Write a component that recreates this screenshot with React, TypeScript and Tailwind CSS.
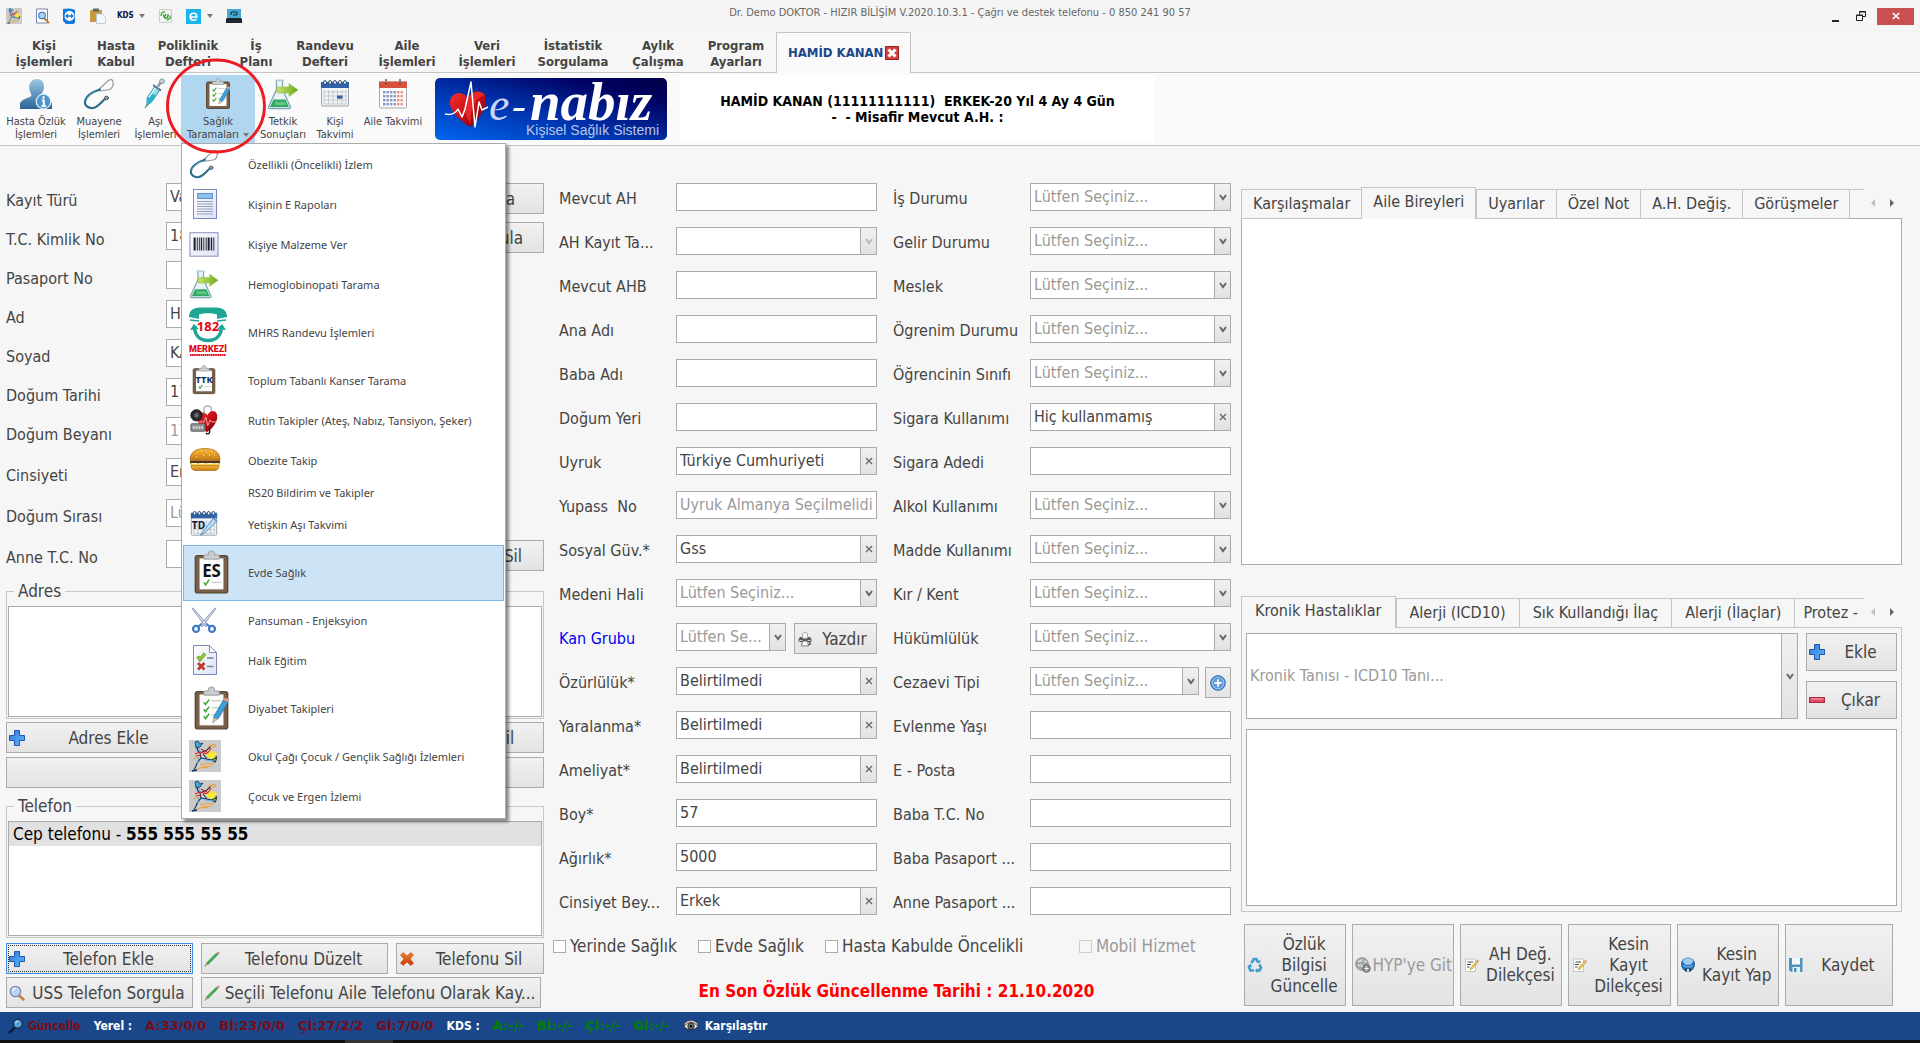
import React, { useId } from "react";

type P = { className?: string };

/* ---------- shared gradients ---------- */

function Gradients() {
  return (
    <svg className="absolute size-0" aria-hidden="true">
      <defs>
        <linearGradient id="gBlue" x1="0" y1="0" x2="0" y2="1">
          <stop offset="0" stopColor="#9cc8e4" />
          <stop offset="1" stopColor="#2a6496" />
        </linearGradient>
        <linearGradient id="gPlus" x1="0" y1="0" x2="1" y2="1">
          <stop offset="0" stopColor="#2f78e0" />
          <stop offset="1" stopColor="#62b8f5" />
        </linearGradient>
        <linearGradient id="gLogo" x1="0" y1="1" x2="1" y2="0">
          <stop offset="0" stopColor="#0066f0" />
          <stop offset="0.45" stopColor="#0030a8" />
          <stop offset="0.8" stopColor="#000060" />
          <stop offset="1" stopColor="#000048" />
        </linearGradient>
        <linearGradient id="gRed" x1="0" y1="0" x2="1" y2="1">
          <stop offset="0" stopColor="#f4352e" />
          <stop offset="0.5" stopColor="#c80e18" />
          <stop offset="1" stopColor="#700008" />
        </linearGradient>
        <linearGradient id="gArrow" x1="0" y1="0" x2="1" y2="0">
          <stop offset="0" stopColor="#c6e56a" />
          <stop offset="1" stopColor="#6aa81c" />
        </linearGradient>
        <linearGradient id="gBun" x1="0" y1="0" x2="0" y2="1">
          <stop offset="0" stopColor="#f6b83e" />
          <stop offset="1" stopColor="#c97d10" />
        </linearGradient>
        <linearGradient id="gCross" x1="0" y1="0" x2="0" y2="1">
          <stop offset="0" stopColor="#f08a2c" />
          <stop offset="1" stopColor="#c9300c" />
        </linearGradient>
        <linearGradient id="gDoc" x1="0" y1="0" x2="1" y2="1">
          <stop offset="0" stopColor="#ffffff" />
          <stop offset="1" stopColor="#dde3f2" />
        </linearGradient>
      </defs>
    </svg>
  );
}

/* ---------- large icons ---------- */

function PersonInfo({ className = "size-8" }: P) {
  return (
    <svg viewBox="0 0 32 32" className={className} aria-hidden="true">
      <path d="M17 1c4.500 0 7 3 7 7.500 0 3.500-1.500 6-3 8-.6 1.500.3 2.500 2 3.200 4 1.600 8 2.500 9 6V31H0v-5c.5-3.500 4-4.600 8-6.300 3-1 4-2 3-4-1.200-2-1.800-4-1.800-7C9.500 4 12.500 1 17 1z" fill="url(#gBlue)" />
      <circle cx="23.500" cy="23.500" r="7.300" fill="#4b93c8" stroke="#d8ecf8" strokeWidth="1.300" />
      <path d="M23.500 18.300v2.400M21.800 22.500h2v5.200M21.500 27.900h4.400" stroke="#fff" strokeWidth="2" fill="none" />
    </svg>
  );
}

function Stethoscope({ className = "size-8" }: P) {
  return (
    <svg viewBox="0 0 32 32" className={className} aria-hidden="true" fill="none" strokeLinecap="round">
      <path d="M15 12 26 2q3.200-1 4 1.200Q31 9 27 11.500L17 13z" stroke="#8f969a" strokeWidth="1.200" />
      <path d="M17 11.500C10 13.500 3 18 2 23.500c-.5 4 3 7 8 6.500 5.500-.8 8-6 13-10" stroke="#2c6f8c" strokeWidth="2.200" />
      <path d="M3.200 22c1.500-4 5-6.500 9-8.200" stroke="#8cc0d2" strokeWidth="0.700" />
      <circle cx="23.500" cy="20" r="1.900" fill="#9aa2a8" stroke="#4a5054" strokeWidth="0.900" />
    </svg>
  );
}

function Syringe({ className = "size-8" }: P) {
  return (
    <svg viewBox="2 0 32 32" className={className} aria-hidden="true">
      <path d="M7 30l3-5" stroke="#6f8088" strokeWidth="1.300" />
      <path d="M9 20 17 8l5 3.500-8 12-5 4z" fill="#8fdde8" stroke="#2f8ca4" />
      <path d="M10 20.500 13.500 15l4.500 3-4.500 6-4 2.500z" fill="#22b4cc" />
      <path d="m15 7 8 5.500" stroke="#5a7480" strokeWidth="1.800" />
      <path d="m20 8.500 3-4.500" stroke="#8b9ba4" strokeWidth="2.600" />
      <circle cx="24" cy="3.200" r="2.400" fill="#c3ced4" stroke="#8b9ba4" />
      <path d="m17 10-6 9.500" stroke="#fff" strokeWidth="1.200" />
    </svg>
  );
}

function Clipboard({ className = "size-8", mark, markClass = "fill-[#111]" }: P & { mark?: string; markClass?: string }) {
  return (
    <svg viewBox="0 0 32 32" className={className} aria-hidden="true">
      <rect x="4.500" y="4" width="23" height="26.500" rx="1.500" fill="#77604a" stroke="#5d4937" />
      <rect x="7.500" y="6" width="17" height="22" fill="#fdfdfd" />
      <path d="M10.500 6.500V4.500q0-1 1-1H14V1.500q2-2 4 0v2h2.500q1 0 1 1v2z" fill="#c9cdd0" stroke="#9a9ea2" strokeWidth="0.700" />
      {mark ? (
        <>
          <text x="16" y="19" textAnchor="middle" fontSize={mark.length > 2 ? 10 : 12} fontWeight="bold" fontFamily="Noto Sans, sans-serif" className={markClass}>
            {mark}
          </text>
          <path d="m10.500 23 1.300 1.800 2.500-3.600" stroke="#3fa535" strokeWidth="1.100" fill="none" />
          <path d="M16 23h7" stroke="#c4c4c4" strokeWidth="0.800" />
        </>
      ) : (
        <>
          {[11.500, 16.500, 21.500].map((y) => (
            <g key={y} fill="none">
              <path d={`m10.500 ${y} 1.300 1.700 2.500-3.500`} stroke="#3fa535" strokeWidth="1.100" />
              <path d={`M16 ${y - 1}h7`} stroke="#c4c4c4" strokeWidth="0.800" />
            </g>
          ))}
          <path d="m17 26 .8-4.500L24.500 10l3 1.800-6.500 11z" fill="#3f9fd8" stroke="#2277b0" strokeWidth="0.600" />
          <path d="m17 26 .6-3.500 2.500 1.500z" fill="#f0c878" />
          <path d="m24.500 10 .9-1.600q2-.6 3 1.700l-.9 1.600z" fill="#e09880" />
        </>
      )}
    </svg>
  );
}

function FlaskArrow({ className = "size-8" }: P) {
  return (
    <svg viewBox="0 0 32 32" className={className} aria-hidden="true">
      <path d="M9.500 2.500v9L1.500 29q-.3 1.500 1.200 1.500h19.600q1.500 0 1.200-1.500l-8-17.500v-9" fill="#eaf4f8" stroke="#7fa6b8" strokeWidth="1.300" />
      <path d="M8 1.500h9v1.800H8z" fill="#b8d0da" />
      <path d="M6.500 21.500h12L22 29H3z" fill="#2fa864" />
      <path d="M8.500 22.500q2 3 6 1l3.500.5 1.500 3H8z" fill="#86d8a4" opacity=".6" />
      <path d="M10 9h12V5.500L31 12l-9 6.500V15H10z" fill="url(#gArrow)" stroke="#8cc440" strokeWidth="0.600" />
    </svg>
  );
}

function BlueCalendar({ className = "size-8", td = false }: P & { td?: boolean }) {
  return (
    <svg viewBox="0 0 32 32" className={className} aria-hidden="true">
      <rect x="2.500" y="5" width="27" height="23" rx="1" fill="#f2f4f6" stroke="#9da3aa" />
      <path d="M2 4h28v6H2z" fill="#2f62a8" />
      {[6, 11, 16, 21, 26].map((x) => (
        <ellipse key={x} cx={x} cy="4.500" rx="1.500" ry="2" fill="#dfe6ee" stroke="#24406c" strokeWidth="0.900" />
      ))}
      <path d="M5 14h22M5 18h22M5 22h22M5 26h22M5 12v14M9.500 12v14M14 12v14M18.500 12v14M23 12v14M27 12v14" stroke="#bcc2c8" strokeWidth="0.800" />
      {td ? (
        <>
          <text x="3" y="21.500" fontSize="11" fontWeight="bold" fontFamily="Noto Sans, sans-serif" className="fill-[#0c1c40]">TD</text>
          <path d="m12 28 3-4L26 10l3.500 3-12 12z" fill="#b9dcf4" stroke="#4b86c0" strokeWidth="0.900" />
          <path d="m25 9 5 4.500M28 9l2-3" stroke="#4b86c0" strokeWidth="1.200" />
        </>
      ) : (
        <path d="M18 17.500h5.500v3.200H18z" fill="#2f62a8" />
      )}
    </svg>
  );
}

function RedCalendar({ className = "size-8" }: P) {
  return (
    <svg viewBox="0 0 32 32" className={className} aria-hidden="true">
      <rect x="2.500" y="4" width="27" height="26" rx="1.500" fill="#fbfbfb" stroke="#a5a9ae" />
      <path d="M2 3.500h28V10H2z" fill="#d8503e" />
      <path d="M9 1v5M23 1v5" stroke="#5a3030" strokeWidth="2" />
      <path d="M9 1v4M23 1v4" stroke="#e8e8e8" strokeWidth="0.800" />
      {[13, 17, 21, 25].map((y) =>
        [6, 9.500, 13, 16.500, 20, 23.500].map((x) => (
          <rect key={`${x}-${y}`} x={x} y={y} width="2.400" height="2.400" fill={x > 19 ? "#ec9484" : "#8494c4"} />
        ))
      )}
    </svg>
  );
}

function Report({ className = "size-8" }: P) {
  return (
    <svg viewBox="0 0 32 32" className={className} aria-hidden="true">
      <rect x="4.500" y="1.500" width="23" height="29" fill="url(#gDoc)" stroke="#7c88bc" />
      <rect x="8.500" y="5.500" width="15" height="5" fill="#8fc0ea" stroke="#5c94cc" />
      <path d="M8 13.500h16M8 16h16M8 18.500h16M8 21h16M8 23.500h16M8 26h16" stroke="#8a94b8" strokeWidth="0.900" />
    </svg>
  );
}

function Barcode({ className = "size-8" }: P) {
  return (
    <svg viewBox="0 0 32 32" className={className} aria-hidden="true">
      <rect x="1" y="4" width="30" height="25" fill="url(#gDoc)" stroke="#7c88bc" />
      <path d="M6 9v14M21 9v14" stroke="#1c2030" strokeWidth="2.200" />
      <path d="M8.800 9v14M11 9v14M15.800 9v14M18.300 9v14M26.500 9v14" stroke="#1c2030" strokeWidth="1" />
      <path d="M13.300 9v14M24 9v14" stroke="#1c2030" strokeWidth="1.500" />
    </svg>
  );
}

function Mhrs({ className = "h-[50px] w-[38px]" }: P) {
  return (
    <svg viewBox="0 0 38 50" className={className} aria-hidden="true">
      <path d="M0 8.500Q1 1 10 .5h18q9 .5 10 8v1.500l-10 2V7.500Q19 5 10 7.500V12L0 10z" fill="#1fa594" />
      <path d="m1 13 9 1M37 13l-9 1" stroke="#1fa594" strokeWidth="1.600" />
      <path d="M5.500 19c0 9 5 14.500 13.500 14.500S32.500 28 32.500 19" fill="none" stroke="#1fa594" strokeWidth="3.500" />
      <path d="m1 23 4-6 5 5zM37 23l-4-6-5 5z" fill="#1fa594" />
      <text x="19" y="24" textAnchor="middle" fontSize="13" fontWeight="bold" fontFamily="Noto Sans, sans-serif" className="fill-[#e30613]">182</text>
      <text x="19" y="45" textAnchor="middle" fontSize="9" fontWeight="900" fontFamily="Roboto, sans-serif" className="fill-[#e30613]">MERKEZİ</text>
      <path d="M1 48h36" stroke="#e30613" strokeWidth="2.200" strokeDasharray="1.600 .5" />
    </svg>
  );
}

function HeartMonitor({ className = "size-8" }: P) {
  return (
    <svg viewBox="0 0 32 32" className={className} aria-hidden="true">
      <path d="M16 10V4q0-3 4-3t4 4v3" fill="none" stroke="#b0b4b8" strokeWidth="1.500" />
      <path d="M19 29C9 22 8 16 10 11c2-4 7-4 9.500 0C22 6 27 5 29.500 9 32 15 27 24 19 29z" fill="url(#gRed)" />
      <path d="M10 18h6l2-5 2 9 2.500-6 1.500 2h5" fill="none" stroke="#f4c0c0" strokeWidth="0.900" />
      <circle cx="8" cy="11" r="6" fill="#2c2c2e" stroke="#111" />
      <circle cx="8" cy="11" r="2.500" fill="#6c6c70" />
      <rect x="2" y="20" width="15" height="8" rx="1" fill="#8c8f92" stroke="#5e6164" />
      <path d="M4 24h11" stroke="#d8dadc" strokeWidth="2.500" strokeDasharray="2 1" />
      <path d="M22 24v5q-1 3-4 1" fill="none" stroke="#222" strokeWidth="1.500" />
    </svg>
  );
}

function Burger({ className = "size-8" }: P) {
  return (
    <svg viewBox="0 0 32 32" className={className} aria-hidden="true">
      <path d="M1 16C1 8 7 4.500 16 4.500S31 8 31 16z" fill="url(#gBun)" stroke="#a8660c" strokeWidth="0.700" />
      <path d="M8 9h1M12 7h1M17 8h1M22 7.500h1M25 11h1M14 11h1M20 11h1M7 13h1" stroke="#fff0c0" strokeWidth="1.200" />
      <path d="M1 16.500h30v2.500H1z" fill="#5a2c10" />
      <path d="M1 18.500q4 3.500 8 .5 4 3 8 0 4 3 8 0 3 2 6-.5v2H1z" fill="#8cc63a" />
      <path d="M2 20.500h28" stroke="#f4d448" strokeWidth="1.500" />
      <path d="M2 21.500h28q0 5-5 5H7q-5 0-5-5z" fill="url(#gBun)" stroke="#a8660c" strokeWidth="0.700" />
    </svg>
  );
}

function ScissorsIcon({ className = "size-8" }: P) {
  return (
    <svg viewBox="0 0 32 32" className={className} aria-hidden="true">
      <path d="M4 3 20 21l-2 2.500L3.500 4zM28 3 12 21l2 2.500L28.500 4z" fill="#d6dcec" stroke="#7f8cb4" strokeWidth="0.900" />
      <circle cx="7.500" cy="25.500" r="3.200" fill="none" stroke="#3f7cc4" strokeWidth="2.400" />
      <circle cx="24.500" cy="25.500" r="3.200" fill="none" stroke="#3f7cc4" strokeWidth="2.400" />
      <path d="m10 23 3.500-3M22 23l-3.500-3" stroke="#3f7cc4" strokeWidth="2" />
    </svg>
  );
}

function CheckDoc({ className = "size-8" }: P) {
  return (
    <svg viewBox="0 0 32 32" className={className} aria-hidden="true">
      <path d="M4.500 1.500h16l7 7v22h-23z" fill="url(#gDoc)" stroke="#7c88bc" />
      <path d="M20.500 1.500v7h7z" fill="#fff" stroke="#7c88bc" />
      <path d="m8.500 12.500 2.500 3 5-6" fill="none" stroke="#4e8e16" strokeWidth="3.200" />
      <path d="m8.500 12.500 2.500 3 5-6" fill="none" stroke="#a4dc3c" strokeWidth="1.500" />
      <path d="m9 19 6.500 6.500M15.500 19 9 25.500" stroke="#c03838" strokeWidth="2.800" />
      <path d="M18 14h6.500M18 22.500h6.500" stroke="#7484ac" strokeWidth="1.400" />
    </svg>
  );
}

function Runner({ className = "size-8" }: P) {
  return (
    <svg viewBox="0 0 32 32" className={className} aria-hidden="true">
      <path fill="#cbcbcb" d="M0 0h32v32H0z" />
      <path d="m18 12 4-2 1 3 5-1-2 5 3 4-5-1-4-2-3-3z" fill="#fbe92c" />
      <path d="m6 2 3-1 2 3 3-1-3 4-4 1z" fill="#3ca4dc" stroke="#14355e" strokeWidth="0.800" />
      <path d="M8 7q0 4 3 6l1 5q-4 4-5 8l-2 4M11 13l7-3 4-4" fill="none" stroke="#14355e" strokeWidth="1.100" />
      <path d="m12 18 5 1 6 1 3 2q2-2 1-6M14 14l4 5M23 20l5-3" fill="none" stroke="#14355e" strokeWidth="1.100" />
      <path d="M10 8q0 4 3 5M10 18l-2 5M16 20l8 1" fill="none" stroke="#54b8e8" strokeWidth="1.100" />
      <path d="M6 14q5-3 9-1t7-5M12 9l6 3M7 16l5-1" fill="none" stroke="#e02424" strokeWidth="1.100" />
      <path d="M11 25q8-3 14-1M8 29q6-3 11-1M21 4l6 1M19 6l8 1M4 19l6-2M14 27l9-1" fill="none" stroke="#f0981c" strokeWidth="0.900" />
      <path d="m3 31 5-1" stroke="#14355e" strokeWidth="1.500" />
    </svg>
  );
}

/* ---------- small icons ---------- */

function PlusIcon({ className = "size-4" }: P) {
  return (
    <svg viewBox="0 0 16 16" className={className} aria-hidden="true">
      <path d="M5.500.5h5v5h5v5h-5v5h-5v-5h-5v-5h5z" fill="url(#gPlus)" stroke="#1f56b4" />
    </svg>
  );
}

function MinusIcon({ className = "size-4" }: P) {
  return (
    <svg viewBox="0 0 16 16" className={className} aria-hidden="true">
      <rect x=".5" y="5.500" width="15" height="5" fill="#e04c64" stroke="#a82c40" />
      <path d="M2 7h12" stroke="#f4a4b0" />
    </svg>
  );
}

function PencilIcon({ className = "size-4" }: P) {
  return (
    <svg viewBox="0 0 16 16" className={className} aria-hidden="true">
      <path d="m.5 15.500 2-3.500 1.500 1.500z" fill="#d8b070" stroke="#777" strokeWidth="0.400" />
      <path d="m2.500 12 10-10 1.500 1.500-10 10z" fill="#3cb048" stroke="#1c7a28" strokeWidth="0.500" />
      <path d="m12.500 2 1-1q1-.8 1.800 0t-.3 1.500l-1 1z" fill="#e88080" />
    </svg>
  );
}

function CrossIcon({ className = "size-4" }: P) {
  return (
    <svg viewBox="0 0 16 16" className={className} aria-hidden="true">
      <path d="m4 1.500 4 3.500 4-3.500L14.500 4 11 8l3.500 4-2.500 2.500L8 11l-4 3.500L1.500 12 5 8 1.500 4z" fill="url(#gCross)" stroke="#c2410c" strokeWidth="0.600" strokeLinejoin="round" />
    </svg>
  );
}

function MagnifierIcon({ className = "size-4" }: P) {
  return (
    <svg viewBox="0 0 16 16" className={className} aria-hidden="true">
      <path d="m10 10.500 4.500 4" stroke="#c88838" strokeWidth="2.600" strokeLinecap="round" />
      <circle cx="6.500" cy="6.500" r="5.200" fill="#b8d4f4" stroke="#8088b0" strokeWidth="1.300" />
      <path d="M3.500 6q.5-2.500 3-2.700" stroke="#fff" strokeWidth="1.200" fill="none" />
    </svg>
  );
}

function DarkMagnifier({ className = "size-4" }: P) {
  return (
    <svg viewBox="0 0 16 16" className={className} aria-hidden="true">
      <path d="m6.500 10-5 4.500" stroke="#0b1c38" strokeWidth="2.400" strokeLinecap="round" />
      <circle cx="9.800" cy="5.800" r="4.500" fill="#5aa0d8" stroke="#1c2c44" strokeWidth="1.400" />
      <path d="M7.500 5q.6-2 2.600-2" stroke="#cfe8fa" strokeWidth="1.200" fill="none" />
    </svg>
  );
}

function PrinterIcon({ className = "size-4" }: P) {
  return (
    <svg viewBox="0 0 16 16" className={className} aria-hidden="true">
      <path d="M5.500 6V2.500q2.500-2.500 5 0V6" fill="#f4f4f4" stroke="#a4a4a4" strokeWidth="0.900" />
      <path d="M3 6h2l1 1.500h4L11 6h2l1.500 2.500v2h-13v-2z" fill="#58585a" />
      <path d="M2.500 9.500h3M10.500 9.500h3" stroke="#d4d4d4" strokeWidth="1" />
      <path d="M3 10.500h2.500M10.500 10.500H13v3h-1.500" stroke="#444" strokeWidth="1.200" fill="none" />
      <path d="M5.500 10h5l1 5h-7z" fill="#f8f8f8" stroke="#555" strokeWidth="0.800" />
    </svg>
  );
}

function RoundPlus({ className = "size-4" }: P) {
  return (
    <svg viewBox="0 0 16 16" className={className} aria-hidden="true">
      <circle cx="8" cy="8" r="7.300" fill="#5a9fe0" stroke="#2c64a8" />
      <circle cx="8" cy="8" r="5.800" fill="none" stroke="#a8d0f4" strokeWidth="0.800" />
      <path d="M6.700 3.800h2.600v2.900h2.900v2.600H9.300v2.900H6.700V9.300H3.800V6.700h2.900z" fill="#fff" stroke="#2c64a8" strokeWidth="0.500" />
    </svg>
  );
}

function RecycleIcon({ className = "size-4" }: P) {
  return (
    <svg viewBox="0 0 16 16" className={className} aria-hidden="true" fill="none" stroke="#3c9cd4" strokeWidth="2.600">
      <path d="m4.500 6 2.300-4h2.400l1.800 3" />
      <path d="m12.300 7.500 1.700 3-1.500 3H9.500" />
      <path d="M7 13.500H3.500L2 10.500l1-2" />
      <path d="m9.500 5.500 3.500.8.500-3.500zM10.500 11v5l-2.800-2.500zM1 9.300 3.300 6.500 5.500 10z" fill="#3c9cd4" stroke="none" />
    </svg>
  );
}

function GreyGlobe({ className = "size-4" }: P) {
  return (
    <svg viewBox="0 0 16 16" className={className} aria-hidden="true">
      <circle cx="7" cy="7" r="6.200" fill="#a8a8a8" stroke="#888" />
      <path d="M3 4q3 1 4-2M3 9q3-2 5 1M9 4l3 1" stroke="#dedede" strokeWidth="1.500" fill="none" />
      <circle cx="11.500" cy="11.500" r="3.800" fill="#8c8c8c" stroke="#6c6c6c" />
      <path d="M11.500 9.300v4.400M9.300 11.500h4.400" stroke="#f0f0f0" strokeWidth="1.200" />
    </svg>
  );
}

function NoteIcon({ className = "size-4" }: P) {
  return (
    <svg viewBox="0 0 16 16" className={className} aria-hidden="true">
      <path d="M2.500 2h10v12.500h-10z" fill="#fff" stroke="#c4c4c4" />
      <path d="M4.500 5h5.500M4 7.500h4M4 10h2.500" stroke="#444" strokeWidth="1" />
      <path d="m7 13 .7-2.400L13.500 4l1.500 1.300-5.700 6.700z" fill="#f4cc50" stroke="#a8842c" strokeWidth="0.500" />
      <path d="m13.500 4 .8-1q1.300-.2 1.500 1.200l-.8 1.100z" fill="#e88c8c" />
    </svg>
  );
}

function BlueGlobe({ className = "size-4" }: P) {
  return (
    <svg viewBox="0 0 16 16" className={className} aria-hidden="true">
      <circle cx="8" cy="7.500" r="7" fill="#1f68b0" />
      <ellipse cx="8" cy="4.500" rx="5" ry="3.400" fill="#9ccdf0" />
      <path d="M3 8.500q5 3 10 0" stroke="#5ca8e4" strokeWidth="1.800" fill="none" />
      <path d="M5 14.500q0-3.500 3-4 3 .5 3 4z" fill="#0f2c54" />
      <path d="m8 10.500 1.500 4h-3z" fill="#fff" />
    </svg>
  );
}

function FloppyIcon({ className = "size-4" }: P) {
  return (
    <svg viewBox="0 0 16 16" className={className} aria-hidden="true">
      <path d="M1 1h13.500v14H3l-2-2z" fill="#4f94bc" />
      <path d="M4 1h8v6.500H4z" fill="#f4f8fa" />
      <path d="M4.500 10h7.500v5H4.500z" fill="#e8f0f4" />
      <path d="M6 11h2.500v4H6z" fill="#4f94bc" />
    </svg>
  );
}

function EyeIcon({ className = "size-4" }: P) {
  return (
    <svg viewBox="0 0 16 16" className={className} aria-hidden="true">
      <path d="M.8 8.500Q8 0 15.200 8.500 8 15.500.8 8.500z" fill="#f4f0ea" stroke="#2a1c18" strokeWidth="0.800" />
      <path d="M1.500 6.500Q8 0 14.500 6.500" fill="none" stroke="#d8b8a0" strokeWidth="1.400" />
      <circle cx="8" cy="8.300" r="3.300" fill="#6c7078" stroke="#222" strokeWidth="0.800" />
      <circle cx="8" cy="8.300" r="1.300" fill="#000" />
    </svg>
  );
}

function Caret({ className = "h-1 w-1.5 fill-[#777]" }: P) {
  return (
    <svg viewBox="0 0 6 4" className={className} aria-hidden="true">
      <path d="M0 0h6L3 4z" />
    </svg>
  );
}

/* ---------- form building blocks ---------- */

function SideMark({ kind, muted }: { kind: "v" | "x"; muted?: boolean }) {
  return (
    <span className="pointer-events-none flex w-4 shrink-0 items-center justify-center border-l border-[#ababab] bg-linear-to-b from-[#f0f0f0] to-[#e2e2e2]">
      <svg viewBox="0 0 8 8" className="size-2" aria-hidden="true" fill="none" stroke={muted ? "#b8b8b8" : "#666"} strokeWidth={kind === "v" ? 2 : 1.300}>
        <path d={kind === "v" ? "m1 2 3 4 3-4" : "m1 1 6 6M7 1 1 7"} />
      </svg>
    </span>
  );
}

type FieldDef = {
  label: string;
  kind?: "text" | "v" | "x";
  value?: string;
  placeholder?: string;
  disabled?: boolean;
  link?: boolean;
  after?: React.ReactNode;
};

const CHOOSE = "Lütfen Seçiniz...";

function Control({ id, f, tall, name }: { id: string; f: FieldDef; tall?: boolean; name?: string }) {
  const kind = f.kind ?? "text";
  return (
    <div className={`flex min-w-0 flex-1 border border-[#ababab] bg-white ${tall ? "h-[86px]" : "h-7"}`}>
      {kind === "text" ? (
        <input id={id} type="text" defaultValue={f.value} placeholder={f.placeholder} disabled={f.disabled} className="w-full min-w-0 bg-transparent px-[3px] text-[16px] text-[#444] outline-none placeholder:text-[#9a9a9a] disabled:text-[#9a9a9a]" />
      ) : (
        <>
          <select id={id} aria-label={name} disabled={f.disabled} className={`w-full min-w-0 flex-1 appearance-none bg-transparent px-[3px] text-[16px] outline-none ${f.value ? "text-[#444]" : "text-[#9a9a9a]"}`}>
            <option>{f.value ?? f.placeholder ?? CHOOSE}</option>
          </select>
          <SideMark kind={kind} muted={f.disabled} />
        </>
      )}
    </div>
  );
}

function Field({ f, labelWidth }: { f: FieldDef; labelWidth: string }) {
  const id = useId();
  return (
    <div className="flex h-7 items-center">
      <label htmlFor={id} className={`shrink-0 pt-1 text-[16px] whitespace-pre ${labelWidth} ${f.link ? "text-[#0000ee]" : ""}`}>
        {f.label}
      </label>
      <Control id={id} f={f} />
      {f.after}
    </div>
  );
}

function Btn({ icon, children, className = "h-[31px]", focused, disabled }: { icon?: React.ReactNode; children: React.ReactNode; className?: string; focused?: boolean; disabled?: boolean }) {
  return (
    <button
      type="button"
      disabled={disabled}
      className={`flex min-w-0 items-center border bg-linear-to-b from-[#f1f1f1] to-[#e3e3e3] pl-[2px] whitespace-nowrap disabled:text-[#9a9a9a] ${focused ? "border-[#3c8fe8] outline-1 -outline-offset-3 outline-dotted outline-[#333]" : "border-[#ababab]"} ${className}`}
    >
      {icon}
      <span className="min-w-0 flex-1 text-center whitespace-pre-line">{children}</span>
    </button>
  );
}

/* ---------- data ---------- */

const MAIN_TABS: [string, string][] = [
  ["Kişi\nİşlemleri", "w-20"],
  ["Hasta\nKabul", "w-16"],
  ["Poliklinik\nDefteri", "w-20"],
  ["İş\nPlanı", "w-14"],
  ["Randevu\nDefteri", "w-[82px]"],
  ["Aile\nİşlemleri", "w-[82px]"],
  ["Veri\nİşlemleri", "w-[78px]"],
  ["İstatistik\nSorgulama", "w-[94px]"],
  ["Aylık\nÇalışma", "w-[76px]"],
  ["Program\nAyarları", "w-[80px]"],
];

const MENU: { text: string; icon?: React.ReactNode; row?: string; active?: boolean }[] = [
  { text: "Özellikli (Öncelikli) İzlem", icon: <Stethoscope className="size-[30px]" /> },
  { text: "Kişinin E Rapoları", icon: <Report /> },
  { text: "Kişiye Malzeme Ver", icon: <Barcode className="size-[30px]" /> },
  { text: "Hemoglobinopati Tarama", icon: <FlaskArrow className="size-[30px]" /> },
  { text: "MHRS Randevu İşlemleri", icon: <Mhrs />, row: "h-14" },
  { text: "Toplum Tabanlı Kanser Tarama", icon: <Clipboard mark="TTK" markClass="fill-[#12235c]" className="size-[30px]" /> },
  { text: "Rutin Takipler (Ateş, Nabız, Tansiyon, Şeker)", icon: <HeartMonitor className="size-[30px]" /> },
  { text: "Obezite Takip", icon: <Burger /> },
  { text: "RS20 Bildirim ve Takipler", row: "h-6" },
  { text: "Yetişkin Aşı Takvimi", icon: <BlueCalendar td className="size-[30px]" /> },
  { text: "Evde Sağlık", icon: <Clipboard mark="ES" className="size-[45px]" />, row: "h-14", active: true },
  { text: "Pansuman - Enjeksyion", icon: <ScissorsIcon className="size-[30px]" /> },
  { text: "Halk Eğitim", icon: <CheckDoc /> },
  { text: "Diyabet Takipleri", icon: <Clipboard className="size-[45px]" />, row: "h-14" },
  { text: "Okul Çağı Çocuk / Gençlik Sağlığı İzlemleri", icon: <Runner /> },
  { text: "Çocuk ve Ergen İzlemi", icon: <Runner /> },
];

const LEFT_FIELDS: (FieldDef & { row: string; button?: React.ReactNode })[] = [
  { label: "Kayıt Türü", value: "Vatandaş", kind: "v", row: "h-[39px]", button: <Btn className="h-[31px] w-[86px]">Ara</Btn> },
  { label: "T.C. Kimlik No", value: "18", row: "h-[39px]", button: <Btn className="h-[31px] w-[102px]">Sorgula</Btn> },
  { label: "Pasaport No", row: "h-[39px]" },
  { label: "Ad", value: "HAMİD", row: "h-[39px]" },
  { label: "Soyad", value: "KANAN", row: "h-[39px]" },
  { label: "Doğum Tarihi", value: "17", row: "h-[39px]" },
  { label: "Doğum Beyanı", value: "17", disabled: true, row: "h-[41px]" },
  { label: "Cinsiyeti", value: "Erkek", kind: "x", row: "h-[41px]" },
  { label: "Doğum Sırası", kind: "v", row: "h-[41px]" },
  { label: "Anne T.C. No", row: "h-[41px]", button: <Btn className="h-[31px] w-16">Sil</Btn> },
];

const COL_ONE: FieldDef[] = [
  { label: "Mevcut AH" },
  { label: "AH Kayıt Ta...", kind: "v", placeholder: " ", disabled: true },
  { label: "Mevcut AHB" },
  { label: "Ana Adı" },
  { label: "Baba Adı" },
  { label: "Doğum Yeri" },
  { label: "Uyruk", kind: "x", value: "Türkiye Cumhuriyeti" },
  { label: "Yupass  No", placeholder: "Uyruk Almanya Seçilmelidi" },
  { label: "Sosyal Güv.*", kind: "x", value: "Gss" },
  { label: "Medeni Hali", kind: "v" },
  {
    label: "Kan Grubu",
    kind: "v",
    placeholder: "Lütfen Se...",
    link: true,
    after: <Btn className="ml-2 h-[31px] w-[83px] shrink-0 self-start" icon={<PrinterIcon />}>Yazdır</Btn>,
  },
  { label: "Özürlülük*", kind: "x", value: "Belirtilmedi" },
  { label: "Yaralanma*", kind: "x", value: "Belirtilmedi" },
  { label: "Ameliyat*", kind: "x", value: "Belirtilmedi" },
  { label: "Boy*", value: "57" },
  { label: "Ağırlık*", value: "5000" },
  { label: "Cinsiyet Bey...", kind: "x", value: "Erkek" },
];

const COL_TWO: FieldDef[] = [
  { label: "İş Durumu", kind: "v" },
  { label: "Gelir Durumu", kind: "v" },
  { label: "Meslek", kind: "v" },
  { label: "Ögrenim Durumu", kind: "v" },
  { label: "Öğrencinin Sınıfı", kind: "v" },
  { label: "Sigara Kullanımı", kind: "x", value: "Hiç kullanmamış" },
  { label: "Sigara Adedi" },
  { label: "Alkol Kullanımı", kind: "v" },
  { label: "Madde Kullanımı", kind: "v" },
  { label: "Kır / Kent", kind: "v" },
  { label: "Hükümlülük", kind: "v" },
  {
    label: "Cezaevi Tipi",
    kind: "v",
    after: (
      <button type="button" aria-label="Cezaevi ekle" className="ml-1.5 flex h-[31px] w-[26px] shrink-0 items-center justify-center self-start border border-[#ababab] bg-linear-to-b from-[#f1f1f1] to-[#e3e3e3]">
        <RoundPlus />
      </button>
    ),
  },
  { label: "Evlenme Yaşı" },
  { label: "E - Posta" },
  { label: "Baba T.C. No" },
  { label: "Baba Pasaport ..." },
  { label: "Anne Pasaport ..." },
];

const CHECKS = [
  { label: "Yerinde Sağlık", cell: "w-[145px]" },
  { label: "Evde Sağlık", cell: "w-[127px]" },
  { label: "Hasta Kabulde Öncelikli", cell: "w-[254px]" },
  { label: "Mobil Hizmet", cell: "", disabled: true },
];

/* ---------- page parts ---------- */

function TitleBar() {
  return (
    <header className="relative flex h-8 items-center justify-center bg-[#f5f5f5]">
      <div className="absolute inset-y-0 left-1.5 flex items-center">
        <button type="button" aria-label="Ana menü" className="w-[29px]"><Runner className="size-4" /></button>
        <button type="button" aria-label="Ara" className="w-[27px]">
          <svg viewBox="0 0 16 16" className="size-4" aria-hidden="true">
            <path d="M1.500 1h11v14h-11z" fill="#fff" stroke="#7484ac" />
            <path d="m9 10 5 5" stroke="#c07c30" strokeWidth="2" />
            <circle cx="7" cy="7.500" r="3.500" fill="#a8d0f0" stroke="#2c64a8" />
          </svg>
        </button>
        <button type="button" aria-label="Uzak destek" className="w-7">
          <svg viewBox="0 0 16 16" className="size-4" aria-hidden="true">
            <path d="M1 1q8-1.500 12 1v13l-2 1H4l-3-3z" fill="#1478dc" />
            <circle cx="7.500" cy="8" r="5" fill="#fff" />
            <path d="m3 8 3-2.500v1.700h3V5.500L12 8l-3 2.500V8.800H6v1.700z" fill="#1478dc" />
          </svg>
        </button>
        <button type="button" aria-label="Yapıştır" className="w-[27px]">
          <svg viewBox="0 0 16 16" className="size-4" aria-hidden="true">
            <path d="M0 2h12v12H0z" fill="#c8983c" />
            <path d="M3 .5h6v3H3z" fill="#666" />
            <path d="M6.500 6h6l3 3v6.500h-9z" fill="#f4f8fc" stroke="#b0c4d8" strokeWidth="0.800" />
          </svg>
        </button>
        <button type="button" className="flex w-[42px] items-center gap-[5px] text-[8px] leading-4 font-bold text-[#0c1440]">KDS <Caret /></button>
        <button type="button" aria-label="Yenile" className="w-[27px]">
          <svg viewBox="0 0 16 16" className="size-4" aria-hidden="true">
            <path d="M.5 1.500h12v13H.500z" fill="#f4f4f4" stroke="#ccc" />
            <path d="M2 8q0-4 4-4.500M11.500 7.500q0 4-4 4.500" fill="none" stroke="#5cbc4c" strokeWidth="1.600" />
            <path d="M4.500 6.500q0 3 2 3.500t2.500-2V6M6.500 6v2.500" fill="none" stroke="#2c942c" strokeWidth="1.300" />
          </svg>
        </button>
        <button type="button" aria-label="Tarayıcı" className="flex w-10 items-center gap-[6px]">
          <svg viewBox="0 0 16 16" className="size-[15px]" aria-hidden="true">
            <path d="M0 0h16v16H0z" fill="#1cb4ec" />
            <path d="M4.500 8.500h7q0-4-3.500-4t-3.500 4q.2 3.500 3.500 3.500 2.200 0 3.200-1.500" fill="none" stroke="#fff" strokeWidth="1.800" />
          </svg>
          <Caret />
        </button>
        <button type="button" aria-label="Yedekle">
          <svg viewBox="0 0 16 16" className="size-4" aria-hidden="true">
            <path d="M1 1h14v10H1z" fill="#48a8d0" />
            <path d="m0 11 1-1h14l1 1v4H0z" fill="#20242c" />
            <path d="M5 7V5q0-1 1-1h4q1 0 1 1.500T10 7H7" fill="none" stroke="#0c2c48" strokeWidth="1.200" />
          </svg>
        </button>
      </div>
      <h1 className="pb-1.5 text-[11px] text-[#666]">Dr. Demo DOKTOR - HIZIR BİLİŞİM V.2020.10.3.1 - Çağrı ve destek telefonu - 0 850 241 90 57</h1>
      <div className="absolute inset-y-0 right-1.5 flex items-center gap-2">
        <button type="button" aria-label="Simge durumuna küçült" className="flex h-4 w-5 items-end justify-center pb-0.5"><span className="h-0.5 w-[7px] bg-[#222]" /></button>
        <button type="button" aria-label="Geri yükle" className="flex size-4 items-center justify-center">
          <svg viewBox="0 0 10 10" className="size-2.5" aria-hidden="true" fill="none" stroke="#222">
            <path d="M3.500 3.500v-3h6v5h-3M3 1h7M.5 4.500h6v5h-6zM0 4h7" />
          </svg>
        </button>
        <button type="button" aria-label="Kapat" className="flex h-[17px] w-[37px] items-center justify-center bg-[#c75050]">
          <svg viewBox="0 0 8 8" className="size-2" aria-hidden="true" stroke="#fff" strokeWidth="1.700"><path d="m.8 1 6.400 6M7.200 1 .8 7" /></svg>
        </button>
      </div>
    </header>
  );
}

function MainTabs() {
  return (
    <nav className="flex h-[41px] border-b border-[#c5c5c5] bg-[#f6f6f6] pl-1 text-[13px] leading-4 font-bold text-[#444]">
      {MAIN_TABS.map(([t, w]) => (
        <a key={t} href="#" className={`shrink-0 pt-1.5 text-center whitespace-pre-line ${w}`}>{t}</a>
      ))}
      <a href="#" className="-mb-px flex items-center gap-0.5 border border-b-0 border-[#c5c5c5] bg-[#fafafa] px-[11px] text-[#1a478a]">
        HAMİD KANAN
        <svg viewBox="0 0 14 14" className="size-3.5" aria-hidden="true">
          <path d="M.5.500h13v13H.500z" fill="#d8403c" stroke="#8c2020" />
          <path d="m3.500 3.500 7 7M10.500 3.500l-7 7" stroke="#fff" strokeWidth="3" />
        </svg>
      </a>
    </nav>
  );
}

function RibbonButton({ icon, text, width }: { icon: React.ReactNode; text: string; width: string }) {
  return (
    <button type="button" className={`flex shrink-0 flex-col items-center pt-[3px] ${width}`}>
      {icon}
      <span className="mt-[5px] whitespace-pre">{text}</span>
    </button>
  );
}

function ScreeningMenu() {
  return (
    <ul role="menu" className="absolute top-full left-0 z-20 w-[325px] border border-[#ababab] bg-white p-px font-['Noto_Sans',sans-serif] text-[11px] text-[#444] shadow-[3px_3px_3px_rgba(0,0,0,0.45)]">
      {MENU.map((m) => (
        <li key={m.text} role="none">
          <button type="button" role="menuitem" className={`flex w-full items-center border pb-0.5 pl-[5px] text-left ${m.row ?? "h-10"} ${m.active ? "border-[#7eb4ea] bg-[#cde4f7]" : "border-transparent"}`}>
            <span className="flex w-[59px] shrink-0 items-center">{m.icon}</span>
            {m.text}
          </button>
        </li>
      ))}
    </ul>
  );
}

function ENabizLogo() {
  return (
    <svg viewBox="0 0 232 62" className="h-[62px] w-[232px] shrink-0 overflow-visible" role="img" aria-label="e-nabız Kişisel Sağlık Sistemi">
      <rect width="232" height="62" rx="5" fill="url(#gLogo)" />
      <path d="M35 49C21 40 14 31 15 23c2-9 12-11 18-3 4-8 13-9 17-3 3 10-3 22-15 32z" fill="url(#gRed)" />
      <path d="M36 46C29 36 27 28 33 20c4-7 13-8 17-3-8 2-15 10-14 29z" fill="#f2322c" opacity=".7" />
      <path d="M10 36q9 2 13-5l4 8 3-8 6-27 4 45 4-25 3 8 6-3" fill="none" stroke="#fff" strokeWidth="1.500" strokeLinejoin="round" />
      <text x="54" y="42" fontSize="46" fontStyle="italic" fontFamily="Liberation Serif, serif" fill="#c8d6f8">e</text>
      <path d="M79 30h11l-1 3H78z" fill="#fff" />
      <text x="95" y="42" fontSize="55" fontStyle="italic" fontWeight="bold" fontFamily="Liberation Serif, serif" fill="#fff">nabız</text>
      <text x="91" y="57" fontSize="14" fontFamily="Liberation Sans, sans-serif" fill="#b8c6ea">Kişisel Sağlık Sistemi</text>
    </svg>
  );
}

function Ribbon() {
  return (
    <div className="flex h-[73px] items-start border-b border-[#c5c5c5] bg-[#fafafa] pt-0.5 pl-1 text-[11px] leading-[13px] text-[#444]">
      <RibbonButton width="w-16" icon={<PersonInfo />} text={"Hasta Özlük\nİşlemleri"} />
      <RibbonButton width="w-[62px]" icon={<Stethoscope />} text={"Muayene\nİşlemleri"} />
      <RibbonButton width="w-[51px]" icon={<Syringe />} text={"Aşı\nİşlemleri"} />
      <div className="relative w-[74px] shrink-0">
        <button type="button" aria-haspopup="menu" aria-expanded="true" className="flex h-[68px] w-full flex-col items-center bg-[#b1d6f0] pt-[3px]">
          <Clipboard />
          <span className="mt-[5px]">Sağlık</span>
          <span className="flex items-center gap-1">Taramaları <Caret /></span>
        </button>
        <ScreeningMenu />
        <svg viewBox="0 0 102 98" className="pointer-events-none absolute -top-[18px] -left-4 z-30 h-[98px] w-[102px] max-w-none" aria-hidden="true">
          <ellipse cx="51" cy="49" rx="48.500" ry="46" fill="none" stroke="#ed1c24" strokeWidth="3" />
        </svg>
      </div>
      <RibbonButton width="w-14" icon={<FlaskArrow />} text={"Tetkik\nSonuçları"} />
      <RibbonButton width="w-12" icon={<BlueCalendar />} text={"Kişi\nTakvimi"} />
      <RibbonButton width="w-[68px]" icon={<RedCalendar />} text="Aile Takvimi" />
      <div className="ml-2 pt-[3px]"><ENabizLogo /></div>
      <p className="ml-[13px] flex h-[68px] w-[475px] items-center justify-center bg-white text-center text-[14px] leading-4 font-bold whitespace-pre text-black">
        {"HAMİD KANAN (11111111111)  ERKEK-20 Yıl 4 Ay 4 Gün\n-  - Misafir Mevcut A.H. :"}
      </p>
    </div>
  );
}

function LeftField({ f }: { f: (typeof LEFT_FIELDS)[number] }) {
  const id = useId();
  return (
    <div className={`flex items-start ${f.row}`}>
      <label htmlFor={id} className="w-40 shrink-0 pt-[7px] text-[16px]">{f.label}</label>
      <Control id={id} f={f} />
      <div className="flex w-28 shrink-0 justify-end">{f.button}</div>
    </div>
  );
}

function PersonPanel() {
  return (
    <section className="flex min-w-0 flex-[538] flex-col pt-[37px] pb-1">
      {LEFT_FIELDS.map((f) => <LeftField key={f.label} f={f} />)}
      <fieldset className="min-w-0 border border-[#c8c8c8] px-px pt-[5px] pb-px">
        <legend className="ml-1.5 px-1 leading-5">Adres</legend>
        <div className="h-[111px] border border-[#ababab] bg-white" />
      </fieldset>
      <div className="mt-[3px] grid grid-cols-[187fr_187fr_148fr] gap-2">
        <Btn icon={<PlusIcon />}>Adres Ekle</Btn>
        <Btn icon={<PencilIcon />}>Adresi Düzelt</Btn>
        <Btn icon={<CrossIcon />}>Adresi Sil</Btn>
      </div>
      <Btn className="mt-1 h-[31px]">USS Adres Sorgula</Btn>
      <fieldset className="mt-2 min-w-0 border border-[#c8c8c8] px-px pt-[5px] pb-px">
        <legend className="ml-1.5 px-1 leading-5">Telefon</legend>
        <div className="h-[115px] border border-[#ababab] bg-white">
          <p className="bg-[#e1e1e1] px-1 leading-6 text-black">Cep telefonu - <b>555 555 55 55</b></p>
        </div>
      </fieldset>
      <div className="mt-[5px] grid grid-cols-[187fr_187fr_148fr] gap-2">
        <Btn focused icon={<PlusIcon />}>Telefon Ekle</Btn>
        <Btn icon={<PencilIcon />}>Telefonu Düzelt</Btn>
        <Btn icon={<CrossIcon />}>Telefonu Sil</Btn>
      </div>
      <div className="mt-[3px] grid grid-cols-[187fr_340fr] gap-2 pr-[3px]">
        <Btn icon={<MagnifierIcon />}>USS Telefon Sorgula</Btn>
        <Btn icon={<PencilIcon />}>Seçili Telefonu Aile Telefonu Olarak Kay...</Btn>
      </div>
    </section>
  );
}

function DetailPanel() {
  return (
    <section className="ml-2 min-w-0 flex-[679] pt-[37px]">
      <div className="grid grid-cols-[318fr_338fr] gap-x-4 pl-[7px]">
        <div className="flex min-w-0 flex-col gap-4">
          {COL_ONE.map((f) => <Field key={f.label} f={f} labelWidth="w-[117px]" />)}
        </div>
        <div className="flex min-w-0 flex-col gap-4">
          {COL_TWO.map((f) => <Field key={f.label} f={f} labelWidth="w-[137px]" />)}
        </div>
      </div>
      <div className="mt-[21px] flex pl-px">
        {CHECKS.map((c) => (
          <label key={c.label} className={`flex shrink-0 items-center gap-1 leading-5 whitespace-nowrap ${c.cell} ${c.disabled ? "text-[#9a9a9a]" : ""}`}>
            <input type="checkbox" disabled={c.disabled} className="size-[13px] appearance-none border border-[#ababab] bg-white disabled:border-[#cfcfcf] disabled:bg-transparent" />
            {c.label}
          </label>
        ))}
      </div>
      <p className="mt-[25px] pl-2.5 text-center leading-5 font-bold text-[#f00]">En Son Özlük Güncellenme Tarihi : 21.10.2020</p>
    </section>
  );
}

function TabStrip({ tabs, active, cut, pad }: { tabs: string[]; active: number; cut: React.ReactNode; pad: string }) {
  return (
    <div className="flex h-8 items-end text-[16px]" role="tablist">
      <div className="flex min-w-0 flex-1 items-end overflow-hidden">
        {tabs.map((t, i) => (
          <button
            key={t}
            type="button"
            role="tab"
            aria-selected={i === active}
            className={`shrink-0 border-t border-l border-[#c5c5c5] bg-[#f6f6f6] whitespace-nowrap ${pad} ${i === active ? "h-8 border-r pb-1" : "h-[30px] border-b"} ${i === tabs.length - 1 ? "border-r" : ""}`}
          >
            {t}
          </button>
        ))}
        {cut}
      </div>
      <div className="flex w-[38px] shrink-0 items-center justify-between self-stretch pr-2 pl-[7px]">
        <button type="button" aria-label="Önceki"><svg viewBox="0 0 4 8" className="h-2 w-1 fill-[#c0c0c0]" aria-hidden="true"><path d="M4 0v8L0 4z" /></svg></button>
        <button type="button" aria-label="Sonraki"><svg viewBox="0 0 4 8" className="h-2 w-1 fill-[#666]" aria-hidden="true"><path d="M0 0v8l4-4z" /></svg></button>
      </div>
    </div>
  );
}

function SidePanel() {
  return (
    <section className="ml-2.5 min-w-0 flex-[661] pt-[41px]">
      <TabStrip
        pad="px-[11px]"
        tabs={["Karşılaşmalar", "Aile Bireyleri", "Uyarılar", "Özel Not", "A.H. Değiş.", "Görüşmeler"]}
        active={1}
        cut={<span className="h-[30px] flex-1 border-t border-[#c5c5c5]" />}
      />
      <div className="-mt-px h-[347px] border border-[#ababab] bg-white" />

      <div className="mt-[31px]">
        <TabStrip
          pad="px-[13px]"
          tabs={["Kronik Hastalıklar", "Alerji (ICD10)", "Sık Kullandığı İlaç", "Alerji (İlaçlar)"]}
          active={0}
          cut={<span className="h-[30px] flex-1 border-t border-[#c5c5c5] pl-2 leading-7 whitespace-nowrap">Protez -</span>}
        />
      </div>
      <div className="-mt-px border border-[#c5c5c5] px-1 py-[5px]">
        <div className="flex gap-2">
          <Control id="icd-search" name="Kronik Tanısı" tall f={{ label: "Kronik Tanısı", kind: "v", placeholder: "Kronik Tanısı - ICD10 Tanı..." }} />
          <div className="flex w-[91px] shrink-0 flex-col justify-between">
            <Btn className="h-[38px]" icon={<PlusIcon />}>Ekle</Btn>
            <Btn className="h-[38px]" icon={<MinusIcon />}>Çıkar</Btn>
          </div>
        </div>
        <div className="mt-2.5 h-[177px] border border-[#ababab] bg-white" />
      </div>

      <div className="mt-3 mr-[9px] mb-1.5 ml-[3px] grid grid-cols-[102fr_102fr_102fr_102fr_102fr_108fr] gap-1.5 leading-[21px]">
        <Btn className="h-[82px]" icon={<RecycleIcon />}>{"Özlük\nBilgisi\nGüncelle"}</Btn>
        <Btn className="h-[82px]" disabled icon={<GreyGlobe />}>HYP'ye Git</Btn>
        <Btn className="h-[82px]" icon={<NoteIcon />}>{"AH Değ.\nDilekçesi"}</Btn>
        <Btn className="h-[82px]" icon={<NoteIcon />}>{"Kesin\nKayıt\nDilekçesi"}</Btn>
        <Btn className="h-[82px]" icon={<BlueGlobe />}>{"Kesin\nKayıt Yap"}</Btn>
        <Btn className="h-[82px]" icon={<FloppyIcon />}>Kaydet</Btn>
      </div>
    </section>
  );
}

const LOCAL_COUNTS = ["A:33/0/0", "Bİ:23/0/0", "Çİ:27/2/2", "Gİ:7/0/0"];
const KDS_COUNTS = ["A:-/-", "Bİ:-/-", "Çİ:-/-", "Gİ:-/-"];

function StatusBar() {
  return (
    <footer>
      <div className="flex h-7 items-center gap-[13px] bg-[#1a478a] pl-2 text-[12px] font-bold whitespace-nowrap text-[#7d0a14]">
        <button type="button" className="flex items-center gap-1"><DarkMagnifier />Güncelle</button>
        <span className="text-white">Yerel :</span>
        {LOCAL_COUNTS.map((c) => <span key={c} className="font-['DejaVu_Sans',sans-serif] text-[13px]">{c}</span>)}
        <span className="text-white">KDS :</span>
        {KDS_COUNTS.map((c) => <span key={c} className="font-['DejaVu_Sans',sans-serif] text-[13px] text-[#008000]">{c}</span>)}
        <button type="button" className="flex items-center gap-1.5 text-white"><EyeIcon />Karşılaştır</button>
      </div>
      <div className="h-[3px] bg-[#101010] pl-[345px]"><div className="h-full w-12 bg-[#333]" /></div>
    </footer>
  );
}

export default function App() {
  return (
    <div className="flex min-h-screen flex-col bg-[#f6f6f6] font-['DejaVu_Sans_Condensed','Noto_Sans',sans-serif] text-[17px] leading-[22px] text-[#444]">
      <Gradients />
      <TitleBar />
      <MainTabs />
      <Ribbon />
      <main className="flex flex-1 pr-[18px] pl-1.5">
        <PersonPanel />
        <DetailPanel />
        <SidePanel />
      </main>
      <StatusBar />
    </div>
  );
}
